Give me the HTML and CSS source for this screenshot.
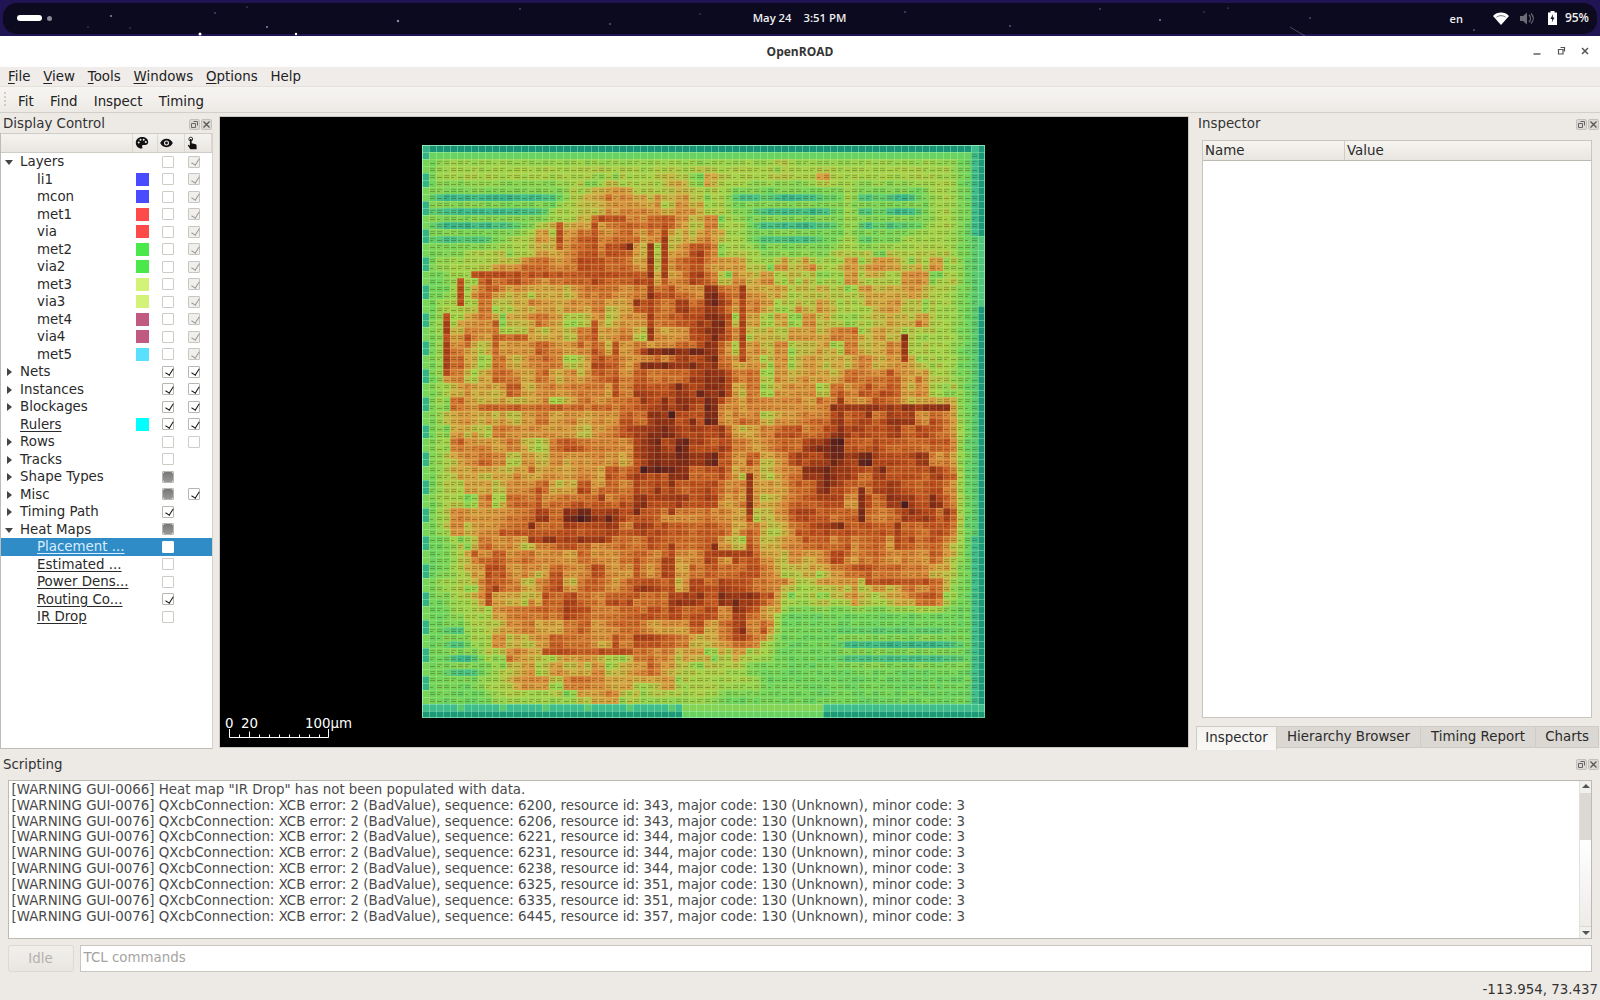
FILE: index.html
```html
<!DOCTYPE html>
<html lang="en">
<head>
<meta charset="utf-8">
<title>OpenROAD</title>
<link rel="stylesheet" href="styles.css">
</head>
<body>
<header class="panel">
  <svg class="stars" width="1600" height="36" viewBox="0 0 1600 36">
    <g fill="#8d8aa8">
      <circle cx="111" cy="16" r="1"/><circle cx="215" cy="13" r=".7"/><circle cx="247" cy="7" r=".6"/><circle cx="267" cy="27" r="1"/><circle cx="130" cy="28" r=".6"/><circle cx="88" cy="27" r=".6"/><circle cx="398" cy="21" r="1.2"/><circle cx="520" cy="9" r=".7"/><circle cx="610" cy="24" r=".8"/><circle cx="700" cy="14" r=".6"/><circle cx="905" cy="12" r=".7"/><circle cx="1010" cy="26" r=".8"/><circle cx="1100" cy="9" r=".7"/><circle cx="1160" cy="20" r=".9"/><circle cx="1204" cy="12" r=".6"/><circle cx="1228" cy="8" r=".6"/><circle cx="1310" cy="18" r=".7"/><circle cx="1474" cy="30" r=".8"/>
    </g>
    <g fill="#fff"><circle cx="200" cy="34" r="1.500"/><circle cx="296" cy="34" r="1.200"/></g>
    <path d="M1290 27l15 9" stroke="#77738f" stroke-width=".6"/>
  </svg>
  <div class="activities"><span class="pill"></span><span class="dot"></span></div>
  <div class="clock"><span>May 24</span><span>3:51 PM</span></div>
  <div class="tray">
    <span class="lang">en</span>
    <svg class="wifi" width="16" height="13" viewBox="0 0 16 13"><path d="M0 4C4-.6 12-.6 16 4L8 13z" fill="#fff"/><path d="M3.500 5.200C6 3.200 10 3.200 12.500 5.200" stroke="#0d0a20" stroke-width="1" fill="none" opacity=".6"/></svg>
    <svg class="speaker" width="14" height="13" viewBox="0 0 14 13"><path d="M0 4h3l4-3.500v12L3 9H0z" fill="#6d6b78"/><path d="M9 3c2 2 2 5 0 7M11 1.500c3 3 3 7 0 10" stroke="#6d6b78" stroke-width="1.200" fill="none"/></svg>
    <svg class="battery" width="9" height="14" viewBox="0 0 9 14"><path d="M2.500 0h4v1.500H9V14H0V1.500h2.500z" fill="#fff"/><path d="M5 3L2.500 8H4.300L3.800 11.500 6.500 6.500H4.700z" fill="#0d0a20"/></svg>
    <span class="pct">95%</span>
  </div>
</header>

<div class="titlebar">
  <span class="wintitle">OpenROAD</span>
  <div class="winbtns">
    <svg width="10" height="10" viewBox="0 0 10 10"><path d="M1.500 8h7" stroke="#555" stroke-width="1.400"/></svg>
    <svg width="10" height="10" viewBox="0 0 10 10"><path d="M2.500 3.500h4.500v4.500h-4.500z M4.500 1.500h4v4" stroke="#555" stroke-width="1.200" fill="none"/></svg>
    <svg width="10" height="10" viewBox="0 0 10 10"><path d="M2 2l6 6M8 2l-6 6" stroke="#555" stroke-width="1.500"/></svg>
  </div>
</div>

<nav class="menubar">
  <span><u>F</u>ile</span><span><u>V</u>iew</span><span><u>T</u>ools</span><span><u>W</u>indows</span><span><u>O</u>ptions</span><span>Help</span>
</nav>

<div class="toolbar">
  <span class="grip"></span>
  <span>Fit</span><span>Find</span><span>Inspect</span><span>Timing</span>
</div>

<main class="main">
  <section class="dock-left">
    <div class="docktitle">
      <span>Display Control</span>
      <div class="fbs">
        <span class="fb"><svg width="9" height="9" viewBox="0 0 9 9"><path d="M1.500 3.500h4v4h-4zM3.500 1.500h4v4" fill="none" stroke="#666"/></svg></span>
        <span class="fb"><svg width="9" height="9" viewBox="0 0 9 9"><path d="M1.500 1.500l6 6M7.500 1.500l-6 6" stroke="#555" stroke-width="1.300"/></svg></span>
      </div>
    </div>
    <div class="tree">
      <div class="thead">
        <span class="th"></span>
        <span class="th"><svg width="14" height="14" viewBox="0 0 14 14"><path d="M7 1C3.400 1 .8 3.500 .8 6.800c0 3.300 2.600 5.800 5.400 5.800 1.300 0 1.500-1 1-1.800-.5-.9 0-1.800 1.100-1.800h1.700c2 0 3.200-1.300 3.200-3C13.200 3 10.500 1 7 1z" fill="#111"/><circle cx="3.700" cy="6.500" r="1" fill="#eee"/><circle cx="5.500" cy="3.800" r="1" fill="#eee"/><circle cx="8.700" cy="3.800" r="1" fill="#eee"/><circle cx="10.800" cy="6" r="1" fill="#eee"/></svg></span>
        <span class="th"><svg width="13" height="10" viewBox="0 0 14 10"><path d="M7 .5C3.700.5 1.200 2.700.2 5c1 2.300 3.500 4.500 6.800 4.500s5.800-2.200 6.800-4.500C12.800 2.700 10.300.5 7 .5z" fill="#111"/><circle cx="7" cy="5" r="2.700" fill="#eee"/><circle cx="7" cy="5" r="1.500" fill="#111"/></svg></span>
        <span class="th"><svg width="10" height="14" viewBox="0 0 12 15"><circle cx="4.500" cy="2.800" r="2.300" fill="none" stroke="#111" stroke-width="1"/><path d="M3.500 2.800h2v5l5 1.200c.7.200 1 .7 1 1.400V15H4L1 10.500l1 -.8 1.500 1.200z" fill="#111"/></svg></span>
      </div>
      <div class="row"><span class="name l0"><i class="tri open"></i>Layers</span><span></span><span><b class="chk"></b></span><span><b class="chk dis"></b></span></div>
      <div class="row"><span class="name l1">li1</span><span><b class="sw blue"></b></span><span><b class="chk"></b></span><span><b class="chk dis"></b></span></div>
      <div class="row"><span class="name l1">mcon</span><span><b class="sw blue"></b></span><span><b class="chk"></b></span><span><b class="chk dis"></b></span></div>
      <div class="row"><span class="name l1">met1</span><span><b class="sw red"></b></span><span><b class="chk"></b></span><span><b class="chk dis"></b></span></div>
      <div class="row"><span class="name l1">via</span><span><b class="sw red"></b></span><span><b class="chk"></b></span><span><b class="chk dis"></b></span></div>
      <div class="row"><span class="name l1">met2</span><span><b class="sw green"></b></span><span><b class="chk"></b></span><span><b class="chk dis"></b></span></div>
      <div class="row"><span class="name l1">via2</span><span><b class="sw green"></b></span><span><b class="chk"></b></span><span><b class="chk dis"></b></span></div>
      <div class="row"><span class="name l1">met3</span><span><b class="sw lime"></b></span><span><b class="chk"></b></span><span><b class="chk dis"></b></span></div>
      <div class="row"><span class="name l1">via3</span><span><b class="sw lime"></b></span><span><b class="chk"></b></span><span><b class="chk dis"></b></span></div>
      <div class="row"><span class="name l1">met4</span><span><b class="sw rose"></b></span><span><b class="chk"></b></span><span><b class="chk dis"></b></span></div>
      <div class="row"><span class="name l1">via4</span><span><b class="sw rose"></b></span><span><b class="chk"></b></span><span><b class="chk dis"></b></span></div>
      <div class="row"><span class="name l1">met5</span><span><b class="sw sky"></b></span><span><b class="chk"></b></span><span><b class="chk dis"></b></span></div>
      <div class="row"><span class="name l0"><i class="tri"></i>Nets</span><span></span><span><b class="chk on"></b></span><span><b class="chk on"></b></span></div>
      <div class="row"><span class="name l0"><i class="tri"></i>Instances</span><span></span><span><b class="chk on"></b></span><span><b class="chk on"></b></span></div>
      <div class="row"><span class="name l0"><i class="tri"></i>Blockages</span><span></span><span><b class="chk on"></b></span><span><b class="chk on"></b></span></div>
      <div class="row"><span class="name l0"><u>Rulers</u></span><span><b class="sw cyan"></b></span><span><b class="chk on"></b></span><span><b class="chk on"></b></span></div>
      <div class="row"><span class="name l0"><i class="tri"></i>Rows</span><span></span><span><b class="chk"></b></span><span><b class="chk"></b></span></div>
      <div class="row"><span class="name l0"><i class="tri"></i>Tracks</span><span></span><span><b class="chk"></b></span><span></span></div>
      <div class="row"><span class="name l0"><i class="tri"></i>Shape Types</span><span></span><span><b class="chk part"></b></span><span></span></div>
      <div class="row"><span class="name l0"><i class="tri"></i>Misc</span><span></span><span><b class="chk part"></b></span><span><b class="chk on"></b></span></div>
      <div class="row"><span class="name l0"><i class="tri"></i>Timing Path</span><span></span><span><b class="chk on"></b></span><span></span></div>
      <div class="row"><span class="name l0"><i class="tri open"></i>Heat Maps</span><span></span><span><b class="chk part"></b></span><span></span></div>
      <div class="row sel"><span class="name l1"><u>Placement ...</u></span><span></span><span><b class="chk"></b></span><span></span></div>
      <div class="row"><span class="name l1"><u>Estimated ...</u></span><span></span><span><b class="chk"></b></span><span></span></div>
      <div class="row"><span class="name l1"><u>Power Dens...</u></span><span></span><span><b class="chk"></b></span><span></span></div>
      <div class="row"><span class="name l1"><u>Routing Co...</u></span><span></span><span><b class="chk on"></b></span><span></span></div>
      <div class="row"><span class="name l1"><u>IR Drop</u></span><span></span><span><b class="chk"></b></span><span></span></div>
    </div>
  </section>

  <section class="viewport">
    <canvas id="heat" class="heat" width="563" height="573"></canvas>
    <div class="scale">
      <span class="s0">0</span><span class="s20">20</span><span class="s100">100µm</span>
      <svg class="ruler" width="102" height="10" viewBox="0 0 102 10"><path d="M1.500 0v8.500h99V0M11.500 8.500v-3M21.500 8.500v-6M31.500 8.500v-3M41.500 8.500v-3M51.500 8.500v-3M61.500 8.500v-3M71.500 8.500v-3M81.500 8.500v-3M91.500 8.500v-3" fill="none" stroke="#fff"/></svg>
    </div>
  </section>

  <section class="dock-right">
    <div class="docktitle">
      <span>Inspector</span>
      <div class="fbs">
        <span class="fb"><svg width="9" height="9" viewBox="0 0 9 9"><path d="M1.500 3.500h4v4h-4zM3.500 1.500h4v4" fill="none" stroke="#666"/></svg></span>
        <span class="fb"><svg width="9" height="9" viewBox="0 0 9 9"><path d="M1.500 1.500l6 6M7.500 1.500l-6 6" stroke="#555" stroke-width="1.300"/></svg></span>
      </div>
    </div>
    <div class="inspector">
      <div class="ihead"><span class="iname">Name</span><span class="ivalue">Value</span></div>
      <div class="ibody"></div>
    </div>
    <div class="tabs">
      <span class="tab active">Inspector</span><span class="tab t2">Hierarchy Browser</span><span class="tab t3">Timing Report</span><span class="tab t4">Charts</span>
    </div>
  </section>
</main>

<section class="scripting">
  <div class="docktitle scripttitle">
    <span>Scripting</span>
    <div class="fbs">
      <span class="fb"><svg width="9" height="9" viewBox="0 0 9 9"><path d="M1.500 3.500h4v4h-4zM3.500 1.500h4v4" fill="none" stroke="#666"/></svg></span>
      <span class="fb"><svg width="9" height="9" viewBox="0 0 9 9"><path d="M1.500 1.500l6 6M7.500 1.500l-6 6" stroke="#555" stroke-width="1.300"/></svg></span>
    </div>
  </div>
  <div class="console">
    <div class="log">
      <p>[WARNING GUI-0066] Heat map "IR Drop" has not been populated with data.</p>
      <p>[WARNING GUI-0076] QXcbConnection: XCB error: 2 (BadValue), sequence: 6200, resource id: 343, major code: 130 (Unknown), minor code: 3</p>
      <p>[WARNING GUI-0076] QXcbConnection: XCB error: 2 (BadValue), sequence: 6206, resource id: 343, major code: 130 (Unknown), minor code: 3</p>
      <p>[WARNING GUI-0076] QXcbConnection: XCB error: 2 (BadValue), sequence: 6221, resource id: 344, major code: 130 (Unknown), minor code: 3</p>
      <p>[WARNING GUI-0076] QXcbConnection: XCB error: 2 (BadValue), sequence: 6231, resource id: 344, major code: 130 (Unknown), minor code: 3</p>
      <p>[WARNING GUI-0076] QXcbConnection: XCB error: 2 (BadValue), sequence: 6238, resource id: 344, major code: 130 (Unknown), minor code: 3</p>
      <p>[WARNING GUI-0076] QXcbConnection: XCB error: 2 (BadValue), sequence: 6325, resource id: 351, major code: 130 (Unknown), minor code: 3</p>
      <p>[WARNING GUI-0076] QXcbConnection: XCB error: 2 (BadValue), sequence: 6335, resource id: 351, major code: 130 (Unknown), minor code: 3</p>
      <p>[WARNING GUI-0076] QXcbConnection: XCB error: 2 (BadValue), sequence: 6445, resource id: 357, major code: 130 (Unknown), minor code: 3</p>
    </div>
    <div class="vbar">
      <span class="arrow up"></span>
      <span class="handle"></span>
      <span class="track"></span>
      <span class="arrow down"></span>
    </div>
  </div>
  <div class="cmdrow">
    <span class="idle">Idle</span>
    <span class="cmd">TCL commands</span>
  </div>
</section>

<footer class="status">-113.954, 73.437</footer>
<script src="heat.js"></script>
</body>
</html>
```
FILE: styles.css
```css
* { box-sizing: border-box; }
html, body { margin: 0; height: 1000px; overflow: hidden; }
body {
  width: 1600px;
  display: flex;
  flex-direction: column;
  background: #edeae6;
  color: #222;
  font: 13.38px/1 "DejaVu Sans", sans-serif;
}
u { text-underline-offset: 2px; }

/* top shell panel */
.panel {
  flex: 0 0 36px;
  position: relative;
  display: flex;
  align-items: center;
  justify-content: space-between;
  background: #211452;
  color: #fff;
}
.panel::before {
  content: "";
  position: absolute;
  inset: 3px 3px 2px 3px;
  border-radius: 14px;
  background: #0c0a1e;
}
.stars { position: absolute; left: 0; top: 0; }
.activities, .clock, .tray { position: relative; display: flex; align-items: center; }
.activities { margin-left: 17px; gap: 5px; width: 300px; }
.pill { width: 25px; height: 6px; border-radius: 3px; background: #fff; }
.dot { width: 5px; height: 5px; border-radius: 50%; background: #8b8a96; }
.clock { gap: 12px; margin-right: 18px; font-family: "Open Sans", sans-serif; font-size: 11.3px; font-weight: 600; color: #eee; }
.tray { width: 300px; justify-content: flex-end; padding-right: 11px; font-family: "Open Sans", sans-serif; font-size: 11px; font-weight: 600; color: #eee; }
.lang { margin-right: 30px; }
.wifi { margin-right: 11px; }
.speaker { margin-right: 14px; }
.battery { margin-right: 8px; }
.pct { font-size: 12px; }

/* window title */
.titlebar {
  flex: 0 0 31px;
  position: relative;
  display: flex;
  align-items: center;
  justify-content: center;
  background: #fff;
}
.wintitle { font-family: "Open Sans", sans-serif; font-size: 12px; font-weight: 700; color: #333; }
.winbtns { position: absolute; right: 10px; top: 10px; display: flex; gap: 14px; }

.menubar {
  flex: 0 0 20px;
  display: flex;
  align-items: center;
  padding-left: 8px;
  gap: 12.800px;
  background: #efecea;
  border-bottom: 1px solid #e4e1dc;
}
.toolbar {
  flex: 0 0 26px;
  display: flex;
  align-items: center;
  gap: 16.300px;
  padding: 4px 0 0 18px;
  background: linear-gradient(#f7f5f2, #edeae6);
  border-bottom: 1px solid #d2cec8;
  position: relative;
}
.grip { position: absolute; left: 4px; top: 5px; width: 2px; height: 14px; border-left: 2px dotted #d0ccc6; }

/* main area */
.main { flex: 0 0 639px; display: flex; }
.dock-left { flex: 0 0 213px; display: flex; flex-direction: column; }
.dock-right { flex: 0 0 404px; margin-left: 8px; display: flex; flex-direction: column; }
.docktitle {
  flex: 0 0 20px;
  display: flex;
  align-items: center;
  justify-content: space-between;
  padding: 2px 1px 0 3px;
  color: #333;
}
.dock-right .docktitle { padding-left: 2px; }
.fbs { display: flex; gap: 1px; }
.fb {
  width: 11px;
  height: 11px;
  display: flex;
  align-items: center;
  justify-content: center;
  border: 1px solid #c4c0ba;
  border-radius: 2px;
  background: #dcd9d4;
}

.tree {
  flex: 1;
  margin-bottom: 3px;
  background: #fff;
  border: 1px solid #bfbbb5;
  border-top: 0;
  border-right: 1px solid #d5d1cb;
  color: #2a2a2a;
}
.thead {
  height: 20px;
  display: grid;
  grid-template-columns: 132px 25px 27px 27px;
  background: linear-gradient(#f5f3f0, #e9e6e1);
  border-bottom: 1px solid #cfcbc5;
  border-top: 1px solid #cfcbc5;
}
.th { display: flex; align-items: center; padding-left: 2px; border-right: 1px solid #dbd7d2; }
.row {
  height: 17.5px;
  display: grid;
  grid-template-columns: 128px 26px 26px 26px;
  align-items: center;
}
.row > span { display: flex; align-items: center; justify-content: center; height: 100%; }
.row > .name { justify-content: flex-start; position: relative; white-space: nowrap; }
.l0 { padding-left: 19px; }
.l1 { padding-left: 36px; }
.sel { background: #308cc6; color: #d8ecff; }
.sel .chk { background: #fff; border-color: #fff; }
.tri { position: absolute; left: 6px; top: 5px; width: 0; height: 0; border-style: solid; border-width: 4px 0 4px 5px; border-color: transparent transparent transparent #444; }
.tri.open { left: 4px; top: 7px; border-width: 5px 4.500px 0 4.500px; border-color: #444 transparent transparent transparent; }
.sw { display: block; width: 13px; height: 13px; }
.blue { background: #4a4aff; }
.red { background: #ff4a4a; }
.green { background: #4ae84a; }
.lime { background: #d2f278; }
.rose { background: #c05a80; }
.sky { background: #5ae0ff; }
.cyan { background: #00ffff; }
.chk {
  position: relative;
  display: block;
  width: 12px;
  height: 12px;
  border: 1px solid #cfcbc6;
  border-radius: 1px;
  background: #fff;
}
.chk.dis { background: #f1efec; border-color: #c9c6c1; }
.chk.dis::after, .chk.on::after {
  content: "";
  position: absolute;
  left: 3.500px;
  top: .5px;
  width: 3.500px;
  height: 7px;
  border: solid #999;
  border-width: 0 1.600px 1.600px 0;
  transform: rotate(32deg);
}
.chk.on { border-color: #b9b5af; }
.chk.on::after { border-color: #111; }
.chk.part { border-color: #b9b5af; background: #fff; }
.chk.part::after {
  content: "";
  position: absolute;
  inset: 0;
  background: linear-gradient(#777, #999);
  border-radius: 2px;
}

.viewport {
  flex: 0 0 968px;
  margin: 4px 0 5px 7px;
  position: relative;
  padding: 28px 0 0 202px;
  background: #000;
  box-shadow: 0 0 0 1px #c9c5bf;
}
.heat { display: block; filter: blur(.4px); }
.scale { position: absolute; left: 0; bottom: 0; width: 140px; height: 30px; color: #fff; }
.scale span { position: absolute; top: 0; font-size: 13.38px; }
.s0 { left: 5px; }
.s20 { left: 21px; }
.s100 { left: 85px; }
.ruler { position: absolute; left: 7.500px; top: 12px; }

.inspector { flex: 0 0 578px; margin: 7px 8px 0 6px; background: #fff; border: 1px solid #c9c5bf; display: flex; flex-direction: column; }
.ihead { flex: 0 0 19px; display: flex; align-items: center; background: linear-gradient(#f6f4f1, #e9e6e1); border-bottom: 1px solid #bdb9b3; color: #2a2a2a; }
.iname { width: 142px; padding: 1px 0 0 2px; height: 100%; line-height: 18px; border-right: 1px solid #cfcbc5; }
.ivalue { padding: 1px 0 0 2px; }
.ibody { flex: 1; }
.tabs { display: flex; margin-top: 8px; height: 24px; color: #2a2a2a; }
.tab { display: flex; align-items: center; justify-content: center; height: 22px; background: #dbd8d3; border: 1px solid #cfcbc5; border-left: 0; }
.tab.active { width: 81px; height: 24px; padding-bottom: 1px; background: linear-gradient(#f4f2ef, #faf9f7); border-left: 1px solid #cfcbc5; border-bottom: 0; }
.t2 { width: 144px; }
.t3 { width: 115px; }
.t4 { width: 63px; }

/* scripting */
.scripting { flex: 0 0 226px; display: flex; flex-direction: column; }
.scripttitle { flex: 0 0 28px; padding-bottom: 5px; }
.console { flex: 0 0 159px; margin: 0 8px 0 7.500px; display: flex; background: #fff; border: 1px solid #bdb9b3; }
.log { flex: 1; padding: 1px 3px; color: #4a4a4a; font-size: 13.38px; }
.log p { margin: 0; height: 15.83px; line-height: 15.83px; white-space: nowrap; }
.vbar { flex: 0 0 12px; display: flex; flex-direction: column; border-left: 1px solid #e3e0db; }
.arrow { flex: 0 0 12px; position: relative; background: #f2f0ed; }
.arrow::after { content: ""; position: absolute; left: 2px; border-style: solid; border-color: transparent; }
.up::after { top: 3px; border-width: 0 4px 4px 4px; border-bottom-color: #555; }
.down::after { top: 4px; border-width: 4px 4px 0 4px; border-top-color: #555; }
.down { border-top: 1px solid #dcd9d4; }
.handle { flex: 0 0 47px; background: #dcd9d5; }
.track { flex: 1; background: linear-gradient(#fff, #eeece9); }
.cmdrow { display: flex; gap: 6px; margin: 6px 8px 0 7.500px; height: 27px; }
.idle {
  flex: 0 0 66px;
  display: flex;
  align-items: center;
  justify-content: center;
  border: 1px solid #dcd9d4;
  border-radius: 3px;
  background: linear-gradient(#f1efec, #e9e6e2);
  color: #b4b1ac;
}
.cmd { flex: 1; padding: 5px 3px; background: #fff; border: 1px solid #c9c5bf; color: #a5a3a0; }
.status { flex: 0 0 22px; text-align: right; padding: 5px 2px 0 0; color: #333; }
```
FILE: heat.js
```js
(function () {
  var rows = [
    "2222222222222222222222222222222222222222",
    "2333333333333333333333333433333333333322",
    "2333333333334433343443433333433333333322",
    "2111111111344553444433112111223121123322",
    "2111111113344444445443221111123121123322",
    "2111111233344566664453321111123121123322",
    "2111123345574676544563321111223122333322",
    "2223333344566765445763332222233333333322",
    "2333345666666665545754433444344454444422",
    "2233667755677666545754444443444544553422",
    "2233635444556657577677555444443444443322",
    "2333634544455566667787354345443344443322",
    "2334535454444545566787354444444345443322",
    "2345443454454555456787345444454444443322",
    "2364464564454564576787344445545545433322",
    "2364454465457665567786454445445545443322",
    "2374565465457666676787464445445655444322",
    "2354456454465667678888454545466686554422",
    "2364444554454667788877454555466676554422",
    "2344455454555667788886454556778877766522",
    "2364455454544667888786465666788778877622",
    "2365455446666667888777564667888877776522",
    "2345654544554657888787564677887887776522",
    "2344545445565657788786453577787777777622",
    "2344445465565647787786454567887687767622",
    "2334546656676677888776453567776677877622",
    "2355566677888877666664545677676767787722",
    "2345566777888767776775454457677676777622",
    "2234655456666656666776454567566676777622",
    "2234766555656566656676666454676665656422",
    "2234666456557654675666677544565666555422",
    "2334556557556547745777777433343453655322",
    "2233555567766666777788776533434434566322",
    "2233345556767777677666766222222222222222",
    "2213345555555765555656766222222222222222",
    "2213355566776567766545753222221111111122",
    "2211344544444444445544433222221111111122",
    "2211234445554447554333322222222222222222",
    "2222334554555555443333332222222222222222",
    "2222233333344543333332222222222222222222",
    "2222222222222222222222222222222222222222"
  ];
  /* x1,y1,x2,y2 in page pixels, heat value */
  var streaks = [
    [472,277,508,277,7],[532,275,615,275,7],[597,220,597,267,7],[598,217,625,217,7],
    [562,223,562,247,7],[458,283,458,303,7],[446,317,446,370,7.5],[493,323,493,353,6.5],
    [505,340,525,340,6.5],[595,323,595,353,7],[648,243,648,340,8],[663,230,663,280,7.5],
    [615,347,615,400,7],[645,350,698,350,8.5],[645,362,698,362,8.5],[665,397,665,433,8],
    [482,407,615,407,6.5],[642,468,675,468,9],[637,463,637,510,7.5],[672,463,672,510,8],
    [505,532,668,532,7],[532,543,608,543,8],[535,487,535,517,7],[670,550,670,623,7.5],
    [628,615,702,615,7],[542,654,632,654,7],[617,637,617,657,7],[492,563,492,603,7],
    [545,590,545,603,7],[638,557,638,597,7],[713,287,713,390,8.5],[708,287,708,390,8],
    [745,290,745,357,7.5],[902,340,902,363,8],[833,407,947,407,8],[840,400,840,433,8],
    [752,477,752,517,8],[862,490,862,520,8.5],[847,527,847,553,7],[707,557,750,557,7.5],
    [747,530,747,617,7],[867,585,940,585,7],[933,507,933,530,7.5],[900,530,900,550,7.5],
    [560,281,600,281,6.500],[830,430,900,430,7.5],[820,460,880,460,7.5]
  ];
  var stops = ["#0f8a70","#3fbc8c","#6ed45c","#a6d24a","#d4a844","#d98a3c","#cf6a2c","#bb4a1e","#8c2e18","#4c1a22"]
    .map(function (h) { return [1, 3, 5].map(function (i) { return parseInt(h.substr(i, 2), 16); }); });
  function color(v) {
    v = Math.max(0, Math.min(9, v));
    var i = Math.min(8, Math.floor(v)), t = v - i, a = stops[i], b = stops[i + 1];
    return "rgb(" + [0, 1, 2].map(function (k) { return Math.round(a[k] + (b[k] - a[k]) * t); }).join(",") + ")";
  }
  var seed = 20240524;
  function rnd() { seed = (seed * 1664525 + 1013904223) >>> 0; return seed / 4294967296; }
  function grid(x, y) {
    x = Math.max(0, Math.min(39, x)); y = Math.max(0, Math.min(40, y));
    var x0 = Math.floor(x), y0 = Math.floor(y), x1 = Math.min(39, x0 + 1), y1 = Math.min(40, y0 + 1);
    var fx = x - x0, fy = y - y0;
    function g(a, b) { return +rows[b].charAt(a); }
    return g(x0, y0) * (1 - fx) * (1 - fy) + g(x1, y0) * fx * (1 - fy) + g(x0, y1) * (1 - fx) * fy + g(x1, y1) * fx * fy;
  }
  var COLS = 80, ROWS = 82, W = 563, H = 573, cw = W / COLS, ch = H / ROWS;
  var ctx = document.getElementById("heat").getContext("2d");
  /* noise shared by 2x2 blocks of bins: the hot areas come in patches */
  var blocks = [];
  for (var b = 0; b < 42 * 42; b++) blocks[b] = rnd() - 0.5;
  var field = [];
  for (var r = 0; r < ROWS; r++) {
    field[r] = [];
    for (var c = 0; c < COLS; c++) {
      var v = grid((c - 0.5) / 2, (r - 0.5) / 2);
      /* cool areas show as thin bands, one bin row in two */
      if (v < 2 && r % 2 === 0) v = 2.3;
      if (v > 3.4) {
        v += blocks[(r >> 1) * 42 + (c >> 1)] * 2.2 + (rnd() - 0.5) * 0.8 - 0.25;
        if (rnd() < 0.02) v += 1.2;
      } else {
        v += (rnd() - 0.5) * 0.35;
      }
      field[r][c] = v;
    }
  }
  streaks.forEach(function (s) {
    var steps = Math.max(Math.abs(s[2] - s[0]), Math.abs(s[3] - s[1])) / 3.5 + 1;
    for (var i = 0; i <= steps; i++) {
      var px = s[0] + (s[2] - s[0]) * i / steps, py = s[1] + (s[3] - s[1]) * i / steps;
      var c = Math.floor((px - 422) / cw), r = Math.floor((py - 145) / ch);
      if (field[r] && field[r][c] !== undefined) {
        field[r][c] = Math.max(field[r][c], s[4] - rnd() * 1.3);
      }
    }
  });
  for (var r = 0; r < ROWS; r++) {
    for (var c = 0; c < COLS; c++) {
      var v = field[r][c], y = 145 + r * ch, ring = false;
      /* the outer ring of cells */
      if (r === 0) { v = 0.2; ring = true; }
      else if (r === 1) { v = 1.9; ring = true; }
      if (c === 0) { v = r % 4 < 2 ? 0.8 : 2.2; ring = true; }
      if (c === 79) { v = (y > 235 && y < 300) ? 1.4 : 0.3; ring = true; }
      if (c === 78) { v = (y < 235 || y > 535) ? 1 : Math.max(1.6, v - 1.6); ring = r === 0 || r === 81; }
      if (r >= 80) {
        var px = 422 + c * cw;
        v = (px > 682 && px < 817) ? (r === 80 ? 2.4 : 1.9) : (r === 80 ? 1 : 0.3);
        if (px <= 682 && c % 6 === 5 && r === 80) v = 1.6;
        ring = true;
      }
      var x0 = Math.round(c * cw), y0 = Math.round(r * ch), x1 = Math.round((c + 1) * cw), y1 = Math.round((r + 1) * ch);
      ctx.fillStyle = color(v);
      ctx.fillRect(x0, y0, x1 - x0, y1 - y0);
      if (!ring) {
        /* placement-row dashes inside each bin */
        ctx.fillStyle = "rgba(60,40,0,.22)";
        if ((c + r) % 3 !== 0) ctx.fillRect(x0 + 1, y0 + 2, x1 - x0 - 2, 1);
        ctx.fillStyle = "rgba(60,40,0,.32)";
        ctx.fillRect(x0 + 1, y0 + 4, x1 - x0 - 1 - ((c * 3 + r) % 4 === 0 ? 3 : 1), 1);
      }
      /* bin outline */
      ctx.fillStyle = ring ? "rgba(190,255,200,.35)" : "rgba(225,255,170,.2)";
      ctx.fillRect(x0, y0, x1 - x0, 1);
      ctx.fillRect(x0, y0, 1, y1 - y0);
    }
  }
  ctx.strokeStyle = "rgba(170,255,200,.55)";
  ctx.strokeRect(0.5, 0.5, W - 1, H - 1);
})();
```
